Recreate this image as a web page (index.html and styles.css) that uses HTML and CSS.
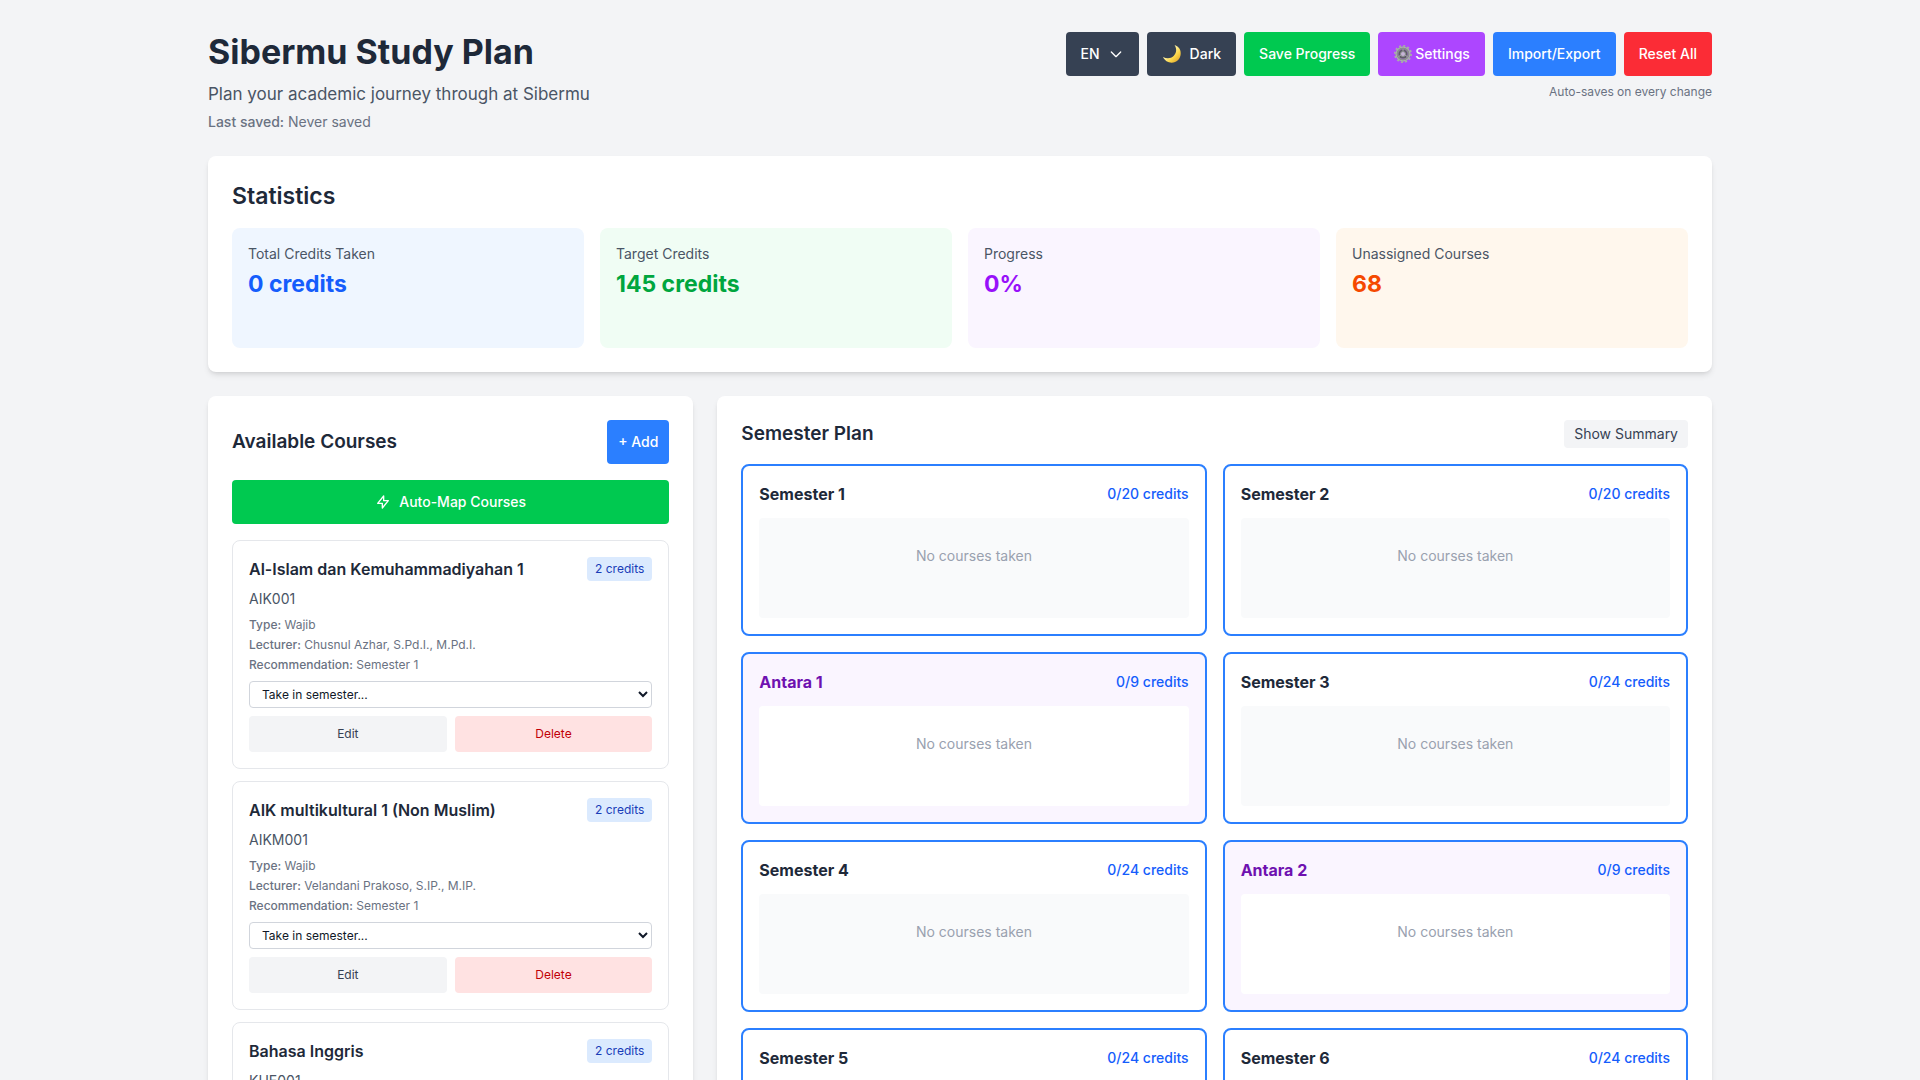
FILE: index.html
```html
<!DOCTYPE html>
<html lang="en">
<head>
<meta charset="utf-8">
<meta name="viewport" content="width=device-width, initial-scale=1">
<title>Sibermu Study Plan</title>
<link rel="stylesheet" href="styles.css">
</head>
<body>
<div class="container">
  <header class="page-header">
    <div>
      <h1>Sibermu Study Plan</h1>
      <p class="subtitle">Plan your academic journey through at Sibermu</p>
      <p class="saved"><b>Last saved:</b> Never saved</p>
    </div>
    <div class="header-side">
      <div class="toolbar">
        <button type="button" class="btn dark">EN
          <svg class="icon" viewBox="0 0 24 24" fill="none" stroke="currentColor" stroke-width="2" stroke-linecap="round" stroke-linejoin="round"><path d="M19 9l-7 7-7-7"/></svg>
        </button>
        <button type="button" class="btn dark">
          <svg class="emoji" viewBox="0 0 20 20"><defs><linearGradient id="moon" x1="0" y1="0" x2="1" y2="1"><stop offset="0.4" stop-color="#fff0a0"/><stop offset="0.65" stop-color="#fbd64a"/><stop offset="1" stop-color="#d9951f"/></linearGradient></defs><path d="M12.600 1C17 2.500 19 6 18.700 10C18.400 15 14.500 18.700 9.700 18.700C6 18.700 2.500 16.500 1 13C5 15 9 14.500 11.600 12C14.600 9 15 5 12.600 1Z" fill="url(#moon)"/></svg>
          Dark
        </button>
        <button type="button" class="btn green">Save Progress</button>
        <button type="button" class="btn purple">
          <svg class="emoji" viewBox="0 0 20 20" fill="none"><circle cx="10" cy="10" r="8" stroke="#a9abae" stroke-width="2" stroke-dasharray="2 2.190"/><circle cx="10" cy="10" r="6" stroke="#8b8d90" stroke-width="3"/><circle cx="10" cy="10" r="7" stroke="#b4b6b8" stroke-width="1"/><circle cx="10" cy="10" r="4.500" fill="#5d5d64"/><path d="M10 5v4M5.500 12.500l4-2M14.500 12.500l-4-2" stroke="#a3a5a8" stroke-width="1"/><circle cx="10" cy="10" r="2.500" fill="#c6b4d6" stroke="#8b8d90"/></svg>Settings
        </button>
        <button type="button" class="btn blue">Import/Export</button>
        <button type="button" class="btn red">Reset All</button>
      </div>
      <p class="hint">Auto-saves on every change</p>
    </div>
  </header>

  <section class="panel stats">
    <h2>Statistics</h2>
    <div class="stat-grid">
      <div class="stat stat-blue"><p>Total Credits Taken</p><strong>0 credits</strong></div>
      <div class="stat stat-green"><p>Target Credits</p><strong>145 credits</strong></div>
      <div class="stat stat-purple"><p>Progress</p><strong>0%</strong></div>
      <div class="stat stat-orange"><p>Unassigned Courses</p><strong>68</strong></div>
    </div>
  </section>

  <main class="columns">
    <section class="panel">
      <div class="panel-head">
        <h3>Available Courses</h3>
        <button type="button" class="btn blue add">+ Add</button>
      </div>
      <button type="button" class="btn green wide">
        <svg class="icon" viewBox="0 0 24 24" fill="none" stroke="currentColor" stroke-width="2" stroke-linecap="round" stroke-linejoin="round"><path d="M13 10V3L4 14h7v7l9-11h-7z"/></svg>
        Auto-Map Courses
      </button>
      <div class="course-list">
        <article class="course">
          <div class="course-head"><h4>Al-Islam dan Kemuhammadiyahan 1</h4><span class="badge">2 credits</span></div>
          <p class="code">AIK001</p>
          <div class="meta">
            <p><b>Type:</b> Wajib</p>
            <p><b>Lecturer:</b> Chusnul Azhar, S.Pd.I., M.Pd.I.</p>
            <p><b>Recommendation:</b> Semester 1</p>
          </div>
          <select aria-label="Semester for Al-Islam dan Kemuhammadiyahan 1"><option>Take in semester...</option></select>
          <div class="actions"><button type="button" class="edit">Edit</button><button type="button" class="delete">Delete</button></div>
        </article>
        <article class="course">
          <div class="course-head"><h4>AIK multikultural 1 (Non Muslim)</h4><span class="badge">2 credits</span></div>
          <p class="code">AIKM001</p>
          <div class="meta">
            <p><b>Type:</b> Wajib</p>
            <p><b>Lecturer:</b> Velandani Prakoso, S.IP., M.IP.</p>
            <p><b>Recommendation:</b> Semester 1</p>
          </div>
          <select aria-label="Semester for AIK multikultural 1"><option>Take in semester...</option></select>
          <div class="actions"><button type="button" class="edit">Edit</button><button type="button" class="delete">Delete</button></div>
        </article>
        <article class="course">
          <div class="course-head"><h4>Bahasa Inggris</h4><span class="badge">2 credits</span></div>
          <p class="code">KUE001</p>
        </article>
      </div>
    </section>

    <section class="panel">
      <div class="panel-head">
        <h3>Semester Plan</h3>
        <button type="button" class="summary">Show Summary</button>
      </div>
      <div class="semester-grid">
        <article class="semester"><div class="semester-head"><h4>Semester 1</h4><span>0/20 credits</span></div><p class="drop">No courses taken</p></article>
        <article class="semester"><div class="semester-head"><h4>Semester 2</h4><span>0/20 credits</span></div><p class="drop">No courses taken</p></article>
        <article class="semester antara"><div class="semester-head"><h4>Antara 1</h4><span>0/9 credits</span></div><p class="drop">No courses taken</p></article>
        <article class="semester"><div class="semester-head"><h4>Semester 3</h4><span>0/24 credits</span></div><p class="drop">No courses taken</p></article>
        <article class="semester"><div class="semester-head"><h4>Semester 4</h4><span>0/24 credits</span></div><p class="drop">No courses taken</p></article>
        <article class="semester antara"><div class="semester-head"><h4>Antara 2</h4><span>0/9 credits</span></div><p class="drop">No courses taken</p></article>
        <article class="semester"><div class="semester-head"><h4>Semester 5</h4><span>0/24 credits</span></div><div class="drop"></div></article>
        <article class="semester"><div class="semester-head"><h4>Semester 6</h4><span>0/24 credits</span></div><div class="drop"></div></article>
      </div>
    </section>
  </main>
</div>
</body>
</html>
```
FILE: styles.css
```css
*, *::before, *::after { box-sizing: border-box; }
html { scrollbar-width: none; }
body {
  margin: 0;
  background: #f3f4f6;
  color: #1e2939;
  font-family: Inter, "Liberation Sans", sans-serif;
  font-size: 16px;
  line-height: 24px;
}
h1, h2, h3, h4, p { margin: 0; }
b { font-weight: 500; }
button, select { font: inherit; }
button { border: 0; border-radius: 4px; cursor: pointer; }

.container { max-width: 1536px; margin: 0 auto; padding: 32px 16px; }

.page-header { display: flex; justify-content: space-between; align-items: flex-start; margin-bottom: 24px; }
h1 { margin-bottom: 8px; font-size: 34px; line-height: 40px; font-weight: 700; }
.subtitle { color: #4a5565; font-size: 17px; line-height: 28px; }
.saved { margin-top: 4px; color: #6a7282; font-size: 14px; line-height: 20px; }
.header-side { display: flex; flex-direction: column; align-items: flex-end; gap: 8px; }
.toolbar { display: flex; gap: 8px; }
.hint { color: #6a7282; font-size: 12px; line-height: 16px; }

.btn {
  display: inline-flex;
  align-items: center;
  justify-content: center;
  min-height: 44px;
  padding: 8px 15px;
  color: #fff;
  font-size: 14px;
  line-height: 20px;
  font-weight: 500;
}
.dark { gap: 8px; background: #364153; }
.green { background: #00c950; }
.purple { gap: 2px; background: #ad46ff; }
.blue { background: #2b7fff; }
.red { background: #fb2c36; }
.add { padding: 8px 11px; }
.wide { width: 100%; gap: 8px; margin-bottom: 16px; }
.icon { width: 16px; height: 16px; }
.emoji { width: 20px; height: 20px; }

.panel {
  padding: 24px;
  background: #fff;
  border-radius: 8px;
  box-shadow: 0 4px 6px -1px rgb(0 0 0 / 0.1), 0 2px 4px -2px rgb(0 0 0 / 0.1);
}
.stats { margin-bottom: 24px; }
h2 { margin-bottom: 16px; font-size: 23px; line-height: 32px; font-weight: 600; }
.stat-grid { display: grid; grid-template-columns: repeat(4, minmax(0, 1fr)); gap: 16px; }
.stat { min-height: 120px; padding: 16px; border-radius: 8px; }
.stat p { margin-bottom: 4px; color: #4a5565; font-size: 14px; line-height: 20px; }
.stat strong { display: block; font-size: 23px; line-height: 32px; font-weight: 700; }
.stat-blue { background: #eff6ff; }
.stat-blue strong { color: #155dfc; }
.stat-green { background: #f0fdf4; }
.stat-green strong { color: #00a63e; }
.stat-purple { background: #faf5ff; }
.stat-purple strong { color: #9810fa; }
.stat-orange { background: #fff7ed; }
.stat-orange strong { color: #f54900; }

.columns { display: grid; grid-template-columns: repeat(3, minmax(0, 1fr)); gap: 24px; }
.columns > :last-child { grid-column: span 2; }
.panel-head { display: flex; justify-content: space-between; align-items: center; margin-bottom: 16px; }
h3 { font-size: 19px; line-height: 28px; font-weight: 600; }
h4 { font-size: 16px; line-height: 24px; font-weight: 600; }

.course-list { display: flex; flex-direction: column; gap: 12px; }
.course { padding: 16px; border: 1px solid #e5e7eb; border-radius: 8px; }
.course-head { display: flex; justify-content: space-between; align-items: flex-start; margin-bottom: 8px; }
.badge { padding: 4px 8px; border-radius: 4px; background: #dbeafe; color: #193cb8; font-size: 12px; line-height: 16px; }
.code { margin-bottom: 8px; color: #4a5565; font-size: 14px; line-height: 20px; }
.meta { display: flex; flex-direction: column; gap: 4px; margin-bottom: 8px; color: #6a7282; font-size: 12px; line-height: 16px; }
select {
  display: block;
  width: 100%;
  height: 27px;
  margin-bottom: 8px;
  padding: 4px 8px;
  border: 1px solid #d1d5dc;
  border-radius: 4px;
  background: #fff;
  color: #101828;
  font-size: 12px;
  line-height: 16px;
}
.actions { display: grid; grid-template-columns: 1fr 1fr; gap: 8px; }
.actions button { min-height: 36px; font-size: 12px; line-height: 16px; }
.edit { background: #f3f4f6; color: #364153; }
.delete { background: #ffe2e2; color: #c10007; }

.summary { padding: 4px 10px; background: #f3f4f6; color: #364153; font-size: 14px; line-height: 20px; }
.semester-grid { display: grid; grid-template-columns: repeat(2, minmax(0, 1fr)); gap: 16px; }
.semester { padding: 16px; border: 2px solid #2b7fff; border-radius: 8px; background: #fff; }
.semester-head { display: flex; justify-content: space-between; align-items: center; margin-bottom: 12px; }
.semester-head h4 { font-weight: 700; }
.semester-head span { color: #155dfc; font-size: 14px; line-height: 20px; font-weight: 500; }
.drop { min-height: 100px; padding: 28px 12px; border-radius: 4px; background: #f9fafb; color: #99a1af; font-size: 14px; line-height: 20px; text-align: center; }
.antara { background: #faf5ff; }
.antara h4 { color: #6e11b0; }
.antara .drop { background: #fff; }
```
